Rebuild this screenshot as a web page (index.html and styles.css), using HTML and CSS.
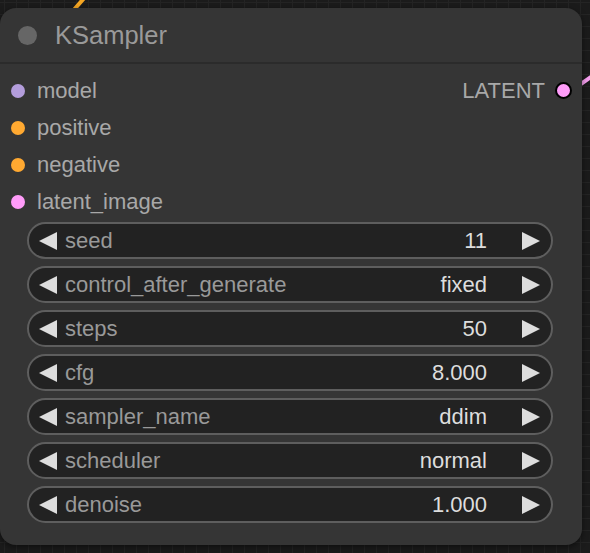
FILE: index.html
```html
<!DOCTYPE html>
<html>
<head>
<meta charset="utf-8">
<link rel="stylesheet" href="styles.css">
</head>
<body>
<div class="canvas">
  <svg class="wires" width="590" height="553" viewBox="0 0 590 553">
    <path d="M72 12 L86 -4" stroke="#f5a623" stroke-width="4" fill="none" stroke-linecap="round"/>
    <path d="M578 86 L598 72" stroke="#f8a0f0" stroke-width="4" fill="none"/>
  </svg>
  <div class="node">
    <div class="title">
      <span class="title-dot"></span>
      <span class="title-text">KSampler</span>
    </div>
    <div class="body">
      <div class="slots">
        <div class="slot-row">
          <div class="slot"><span class="dot model"></span><span>model</span></div>
          <div class="slot out"><span>LATENT</span><span class="dot latent outdot"></span></div>
        </div>
        <div class="slot-row">
          <div class="slot"><span class="dot cond"></span><span>positive</span></div>
        </div>
        <div class="slot-row">
          <div class="slot"><span class="dot cond"></span><span>negative</span></div>
        </div>
        <div class="slot-row">
          <div class="slot"><span class="dot latent"></span><span>latent_image</span></div>
        </div>
      </div>
      <div class="widgets">
        <div class="widget"><span class="arrow left"></span><span class="label">seed</span><span class="value">11</span><span class="arrow right"></span></div>
        <div class="widget"><span class="arrow left"></span><span class="label">control_after_generate</span><span class="value">fixed</span><span class="arrow right"></span></div>
        <div class="widget"><span class="arrow left"></span><span class="label">steps</span><span class="value">50</span><span class="arrow right"></span></div>
        <div class="widget"><span class="arrow left"></span><span class="label">cfg</span><span class="value">8.000</span><span class="arrow right"></span></div>
        <div class="widget"><span class="arrow left"></span><span class="label">sampler_name</span><span class="value">ddim</span><span class="arrow right"></span></div>
        <div class="widget"><span class="arrow left"></span><span class="label">scheduler</span><span class="value">normal</span><span class="arrow right"></span></div>
        <div class="widget"><span class="arrow left"></span><span class="label">denoise</span><span class="value">1.000</span><span class="arrow right"></span></div>
      </div>
    </div>
  </div>
</div>
</body>
</html>
```

FILE: styles.css
```css
* { box-sizing: border-box; }
html, body {
  margin: 0;
  padding: 0;
  width: 590px;
  height: 553px;
  overflow: hidden;
  background: #1c1c1c;
  font-family: "Liberation Sans", Arial, sans-serif;
}
.canvas {
  position: relative;
  width: 590px;
  height: 553px;
  padding-top: 8px;
  background-color: #1b1b1b;
  background-image:
    linear-gradient(to right, #242424 1px, transparent 1px),
    linear-gradient(to bottom, #242424 1px, transparent 1px);
  background-size: 12px 12px;
  background-position: 4px 2px;
}
.wires {
  position: absolute;
  left: 0;
  top: 0;
}
.node {
  position: relative;
  width: 582px;
  height: 537px;
  background: #353535;
  border-radius: 16px;
  box-shadow: 0 2px 6px rgba(0,0,0,0.5);
  display: flex;
  flex-direction: column;
}
.title {
  height: 56px;
  display: flex;
  align-items: center;
  padding-left: 18px;
  padding-top: 1px;
  border-bottom: 2px solid #2b2b2b;
  border-radius: 16px 16px 0 0;
}
.title-dot {
  width: 19px;
  height: 19px;
  border-radius: 50%;
  background: #666;
  margin-right: 18px;
}
.title-text {
  font-size: 25.5px;
  color: #9a9a9a;
}
.body {
  padding-top: 8px;
  display: flex;
  flex-direction: column;
}
.slot-row {
  height: 37px;
  display: flex;
  align-items: center;
  justify-content: space-between;
}
.slot {
  display: flex;
  align-items: center;
  font-size: 22px;
  color: #a8a8a8;
}
.slot .dot {
  width: 14px;
  height: 14px;
  border-radius: 50%;
  margin-left: 11px;
  margin-right: 12px;
}
.slot.out .dot {
  width: 17px;
  height: 17px;
  margin-left: 10px;
  margin-right: 10px;
  border: 2px solid #000;
}
.dot.model { background: #b39ddb; }
.dot.cond { background: #ffa931; }
.dot.latent { background: #ff9cf9; }
.widgets {
  display: flex;
  flex-direction: column;
  gap: 7px;
  padding: 2px 29px 0 27px;
}
.widget {
  height: 37px;
  border: 2px solid #5e5e5e;
  border-radius: 19px;
  background: #222;
  display: flex;
  align-items: center;
  padding: 0 11px 0 10px;
  font-size: 22px;
}
.label {
  color: #999;
  flex: 1;
  margin-left: 8px;
}
.value {
  color: #ddd;
  margin-right: 35px;
}
.arrow {
  width: 0;
  height: 0;
  border-top: 9px solid transparent;
  border-bottom: 9px solid transparent;
}
.arrow.left { border-right: 18px solid #ddd; }
.arrow.right { border-left: 18px solid #ddd; }
```
